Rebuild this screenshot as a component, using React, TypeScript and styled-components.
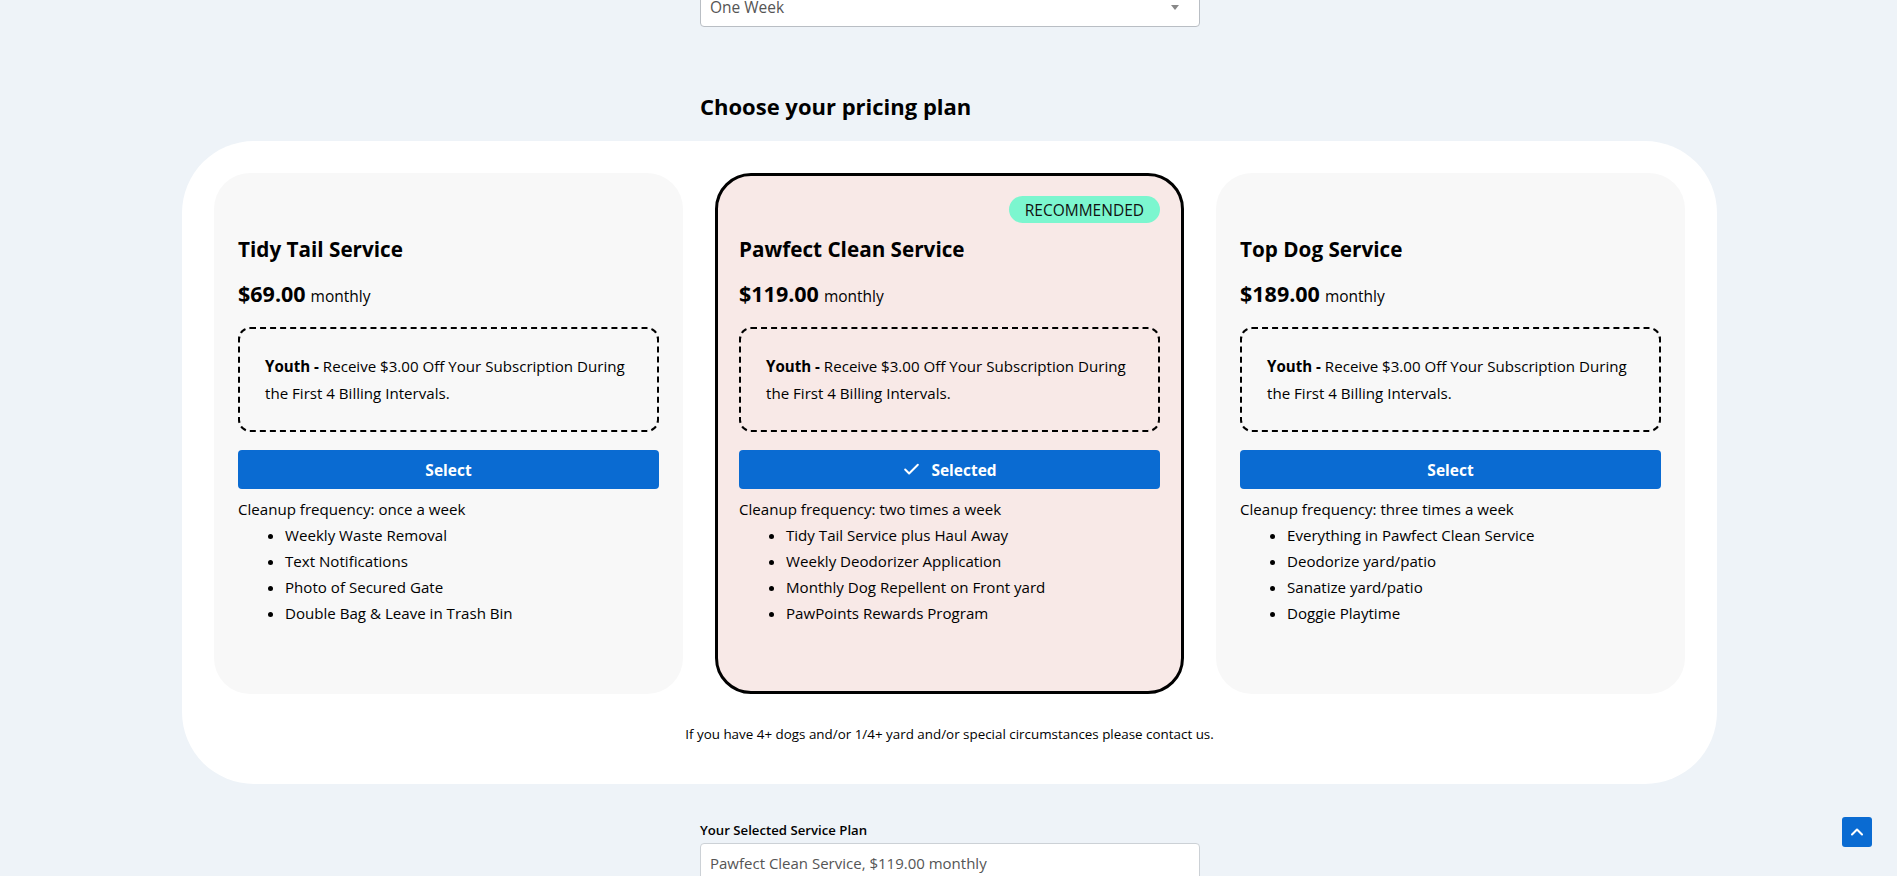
import styled, { createGlobalStyle } from "styled-components";
import { Check, ChevronUp } from "lucide-react";

type Plan = {
  id: number;
  name: string;
  price: string;
  frequency: string;
  features: string[];
  recommended: boolean;
  selected: boolean;
};

const plans: Plan[] = [
  {
    id: 1,
    name: "Tidy Tail Service",
    price: "$69.00",
    frequency: "once a week",
    features: [
      "Weekly Waste Removal",
      "Text Notifications",
      "Photo of Secured Gate",
      "Double Bag & Leave in Trash Bin",
    ],
    recommended: false,
    selected: false,
  },
  {
    id: 2,
    name: "Pawfect Clean Service",
    price: "$119.00",
    frequency: "two times a week",
    features: [
      "Tidy Tail Service plus Haul Away",
      "Weekly Deodorizer Application",
      "Monthly Dog Repellent on Front yard",
      "PawPoints Rewards Program",
    ],
    recommended: true,
    selected: true,
  },
  {
    id: 3,
    name: "Top Dog Service",
    price: "$189.00",
    frequency: "three times a week",
    features: [
      "Everything in Pawfect Clean Service",
      "Deodorize yard/patio",
      "Sanatize yard/patio",
      "Doggie Playtime",
    ],
    recommended: false,
    selected: false,
  },
];

const GlobalStyle = createGlobalStyle`
  * { box-sizing: border-box; }
  body {
    margin: 0;
    background: #eef3f8;
    color: #000;
    font-family: "Open Sans", "Noto Sans", sans-serif;
    overflow: hidden;
  }
`;

const Page = styled.div`
  display: flex;
  flex-direction: column;
  align-items: center;
  padding-bottom: 40px;
`;

const Column = styled.div`
  width: 500px;
  margin-left: 3px;
  display: flex;
  flex-direction: column;
`;

const SelectBox = styled.div`
  margin-top: -13px;
  height: 40px;
  background: #fff;
  border: 1px solid #b9bec4;
  border-radius: 4px;
  display: flex;
  align-items: center;
  justify-content: space-between;
  padding: 0 20px 0 9px;
  font-size: 15.5px;
  color: #555;
`;

const Caret = styled.span`
  width: 0;
  height: 0;
  border-left: 4px solid transparent;
  border-right: 4px solid transparent;
  border-top: 5px solid #888;
`;

const Heading = styled.h2`
  margin: 64px 0 20px;
  font-size: 22px;
  line-height: 30px;
  font-weight: 700;
`;

const Panel = styled.section`
  width: 1535px;
  margin-left: 2px;
  background: #fff;
  border-radius: 72px;
  padding: 32px 32px 41px;
`;

const CardGrid = styled.div`
  display: grid;
  grid-template-columns: repeat(3, 1fr);
  gap: 32px;
`;

const Card = styled.div<{ $featured: boolean }>`
  display: flex;
  flex-direction: column;
  border-radius: 36px;
  background: ${(p) => (p.$featured ? "#f8e9e7" : "#f8f8f8")};
  border: ${(p) => (p.$featured ? "3px solid #000" : "none")};
  padding: ${(p) => (p.$featured ? "20px 21px 65px" : "23px 24px 68px")};
`;

const BadgeRow = styled.div`
  height: 27px;
  display: flex;
  justify-content: flex-end;
`;

const Badge = styled.span`
  background: #7cf6cf;
  border-radius: 14px;
  padding: 0 16px;
  height: 27px;
  display: flex;
  align-items: center;
  font-size: 15.5px;
  color: #111;
`;

const Title = styled.h3`
  margin: 14px 0 0;
  font-size: 20.7px;
  line-height: 24px;
  font-weight: 700;
`;

const PriceRow = styled.div`
  margin-top: 20px;
  line-height: 26px;
  display: flex;
  align-items: baseline;
  gap: 5px;
`;

const Price = styled.strong`
  font-size: 21.5px;
  font-weight: 700;
`;

const Period = styled.span`
  font-size: 15.5px;
`;

const Promo = styled.div`
  margin-top: 18px;
  border: 2px dashed #000;
  border-radius: 12px;
  padding: 24px 24px 24px 25px;
  font-size: 15.1px;
  line-height: 26.6px;
`;

const SelectButton = styled.button<{ $selected: boolean }>`
  margin-top: 18px;
  height: 39px;
  border: none;
  border-radius: 4px;
  background: #0a6bd2;
  color: #fff;
  font-family: inherit;
  font-size: 15.5px;
  font-weight: 700;
  display: flex;
  align-items: center;
  justify-content: center;
  gap: 10px;
  cursor: pointer;
`;

const Frequency = styled.div`
  margin-top: 7px;
  font-size: 15.1px;
  line-height: 26px;
`;

const FeatureList = styled.ul`
  margin: 0;
  padding-left: 47px;
  font-size: 15.1px;
  line-height: 26px;
`;

const Footnote = styled.p`
  margin: 31px 0 0;
  text-align: center;
  font-size: 13.4px;
  line-height: 18px;
`;

const FieldLabel = styled.label`
  margin-top: 36px;
  font-size: 13.2px;
  line-height: 20px;
  font-weight: 600;
`;

const TextInput = styled.div`
  margin-top: 3px;
  height: 40px;
  background: #fff;
  border: 1px solid #ccd1d6;
  border-radius: 4px;
  padding: 0 9px;
  display: flex;
  align-items: center;
  font-size: 15px;
  color: #555;
`;

const ScrollTop = styled.button`
  position: fixed;
  right: 25px;
  bottom: 29px;
  width: 30px;
  height: 30px;
  border: none;
  border-radius: 3px;
  background: #0a6bd2;
  color: #fff;
  display: flex;
  align-items: center;
  justify-content: center;
  padding: 0;
`;

const PlanCard = ({ plan }: { plan: Plan }) => (
  <Card $featured={plan.recommended}>
    <BadgeRow>{plan.recommended && <Badge>RECOMMENDED</Badge>}</BadgeRow>
    <Title>{plan.name}</Title>
    <PriceRow>
      <Price>{plan.price}</Price>
      <Period>monthly</Period>
    </PriceRow>
    <Promo>
      <strong>Youth -</strong> Receive $3.00 Off Your Subscription During the
      First 4 Billing Intervals.
    </Promo>
    <SelectButton $selected={plan.selected}>
      {plan.selected && <Check size={19} strokeWidth={2.5} />}
      {plan.selected ? "Selected" : "Select"}
    </SelectButton>
    <Frequency>Cleanup frequency: {plan.frequency}</Frequency>
    <FeatureList>
      {plan.features.map((f) => (
        <li key={f}>{f}</li>
      ))}
    </FeatureList>
  </Card>
);

export default function App() {
  return (
    <>
      <GlobalStyle />
      <Page>
        <Column>
          <SelectBox>
            <span>One Week</span>
            <Caret />
          </SelectBox>
          <Heading>Choose your pricing plan</Heading>
        </Column>
        <Panel>
          <CardGrid>
            {plans.map((p) => (
              <PlanCard key={p.id} plan={p} />
            ))}
          </CardGrid>
          <Footnote>
            If you have 4+ dogs and/or 1/4+ yard and/or special circumstances
            please contact us.
          </Footnote>
        </Panel>
        <Column>
          <FieldLabel>Your Selected Service Plan</FieldLabel>
          <TextInput>Pawfect Clean Service, $119.00 monthly</TextInput>
        </Column>
      </Page>
      <ScrollTop aria-label="Back to top">
        <ChevronUp size={20} strokeWidth={2.5} />
      </ScrollTop>
    </>
  );
}
